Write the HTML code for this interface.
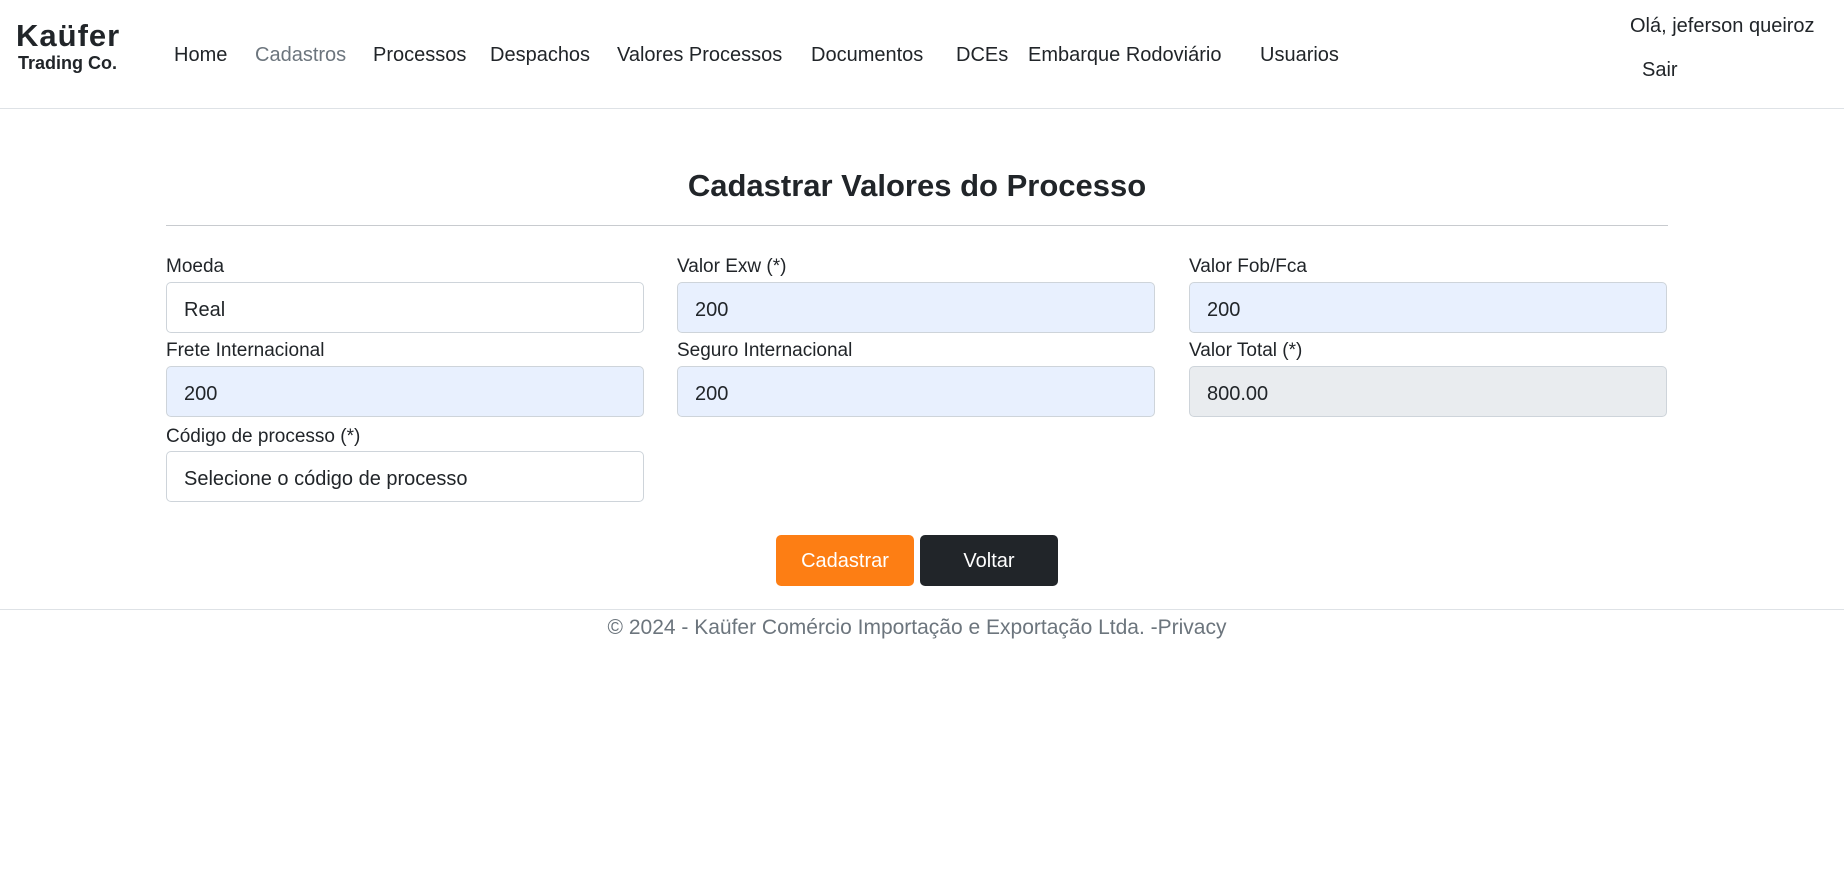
<!DOCTYPE html>
<html><head><meta charset="utf-8"><style>
body{margin:0;width:1844px;height:876px;background:#fff;font-family:"Liberation Sans",sans-serif;color:#212529;position:relative;overflow:hidden}
.a{position:absolute;white-space:nowrap}
.nav{top:44px;font-size:20px;color:#212529}
.hdr{position:absolute;left:0;top:108px;width:1844px;border-top:1px solid #dee2e6}
.lbl{font-size:19px;color:#212529}
.inp{position:absolute;box-sizing:border-box;border:1px solid #ced4da;border-radius:5px;font-size:20px;padding-left:17px;padding-top:3px;line-height:48px;height:51px;width:478px}
.btn{position:absolute;top:535px;height:51px;width:138px;border-radius:5px;color:#fff;font-size:20px;text-align:center;line-height:53px}
</style></head><body>
<div class="a" style="left:16px;top:18px;font-size:31px;font-weight:bold;letter-spacing:1px">Kaüfer</div>
<div class="a" style="left:18px;top:53px;font-size:18px;font-weight:bold">Trading Co.</div>
<div class="a nav" style="left:174px">Home</div>
<div class="a nav" style="left:255px;color:#6c757d">Cadastros</div>
<div class="a nav" style="left:373px">Processos</div>
<div class="a nav" style="left:490px">Despachos</div>
<div class="a nav" style="left:617px">Valores Processos</div>
<div class="a nav" style="left:811px">Documentos</div>
<div class="a nav" style="left:956px">DCEs</div>
<div class="a nav" style="left:1028px">Embarque Rodoviário</div>
<div class="a nav" style="left:1260px">Usuarios</div>
<div class="a" style="left:1630px;top:15px;font-size:20px">Olá, jeferson queiroz</div>
<div class="a" style="left:1642px;top:59px;font-size:20px">Sair</div>
<div class="hdr"></div>
<div class="a" style="left:0;width:1834px;text-align:center;top:168px;font-size:31px;font-weight:bold">Cadastrar Valores do Processo</div>
<div class="a" style="left:166px;top:225px;width:1502px;border-top:1px solid #c8cbcf"></div>

<div class="a lbl" style="left:166px;top:256px">Moeda</div>
<div class="inp" style="left:166px;top:282px;background:#fff">Real</div>
<div class="a lbl" style="left:677px;top:256px">Valor Exw (*)</div>
<div class="inp" style="left:677px;top:282px;background:#e8f0fe">200</div>
<div class="a lbl" style="left:1189px;top:256px">Valor Fob/Fca</div>
<div class="inp" style="left:1189px;top:282px;background:#e8f0fe">200</div>

<div class="a lbl" style="left:166px;top:340px">Frete Internacional</div>
<div class="inp" style="left:166px;top:366px;background:#e8f0fe">200</div>
<div class="a lbl" style="left:677px;top:340px">Seguro Internacional</div>
<div class="inp" style="left:677px;top:366px;background:#e8f0fe">200</div>
<div class="a lbl" style="left:1189px;top:340px">Valor Total (*)</div>
<div class="inp" style="left:1189px;top:366px;background:#e9ecef">800.00</div>

<div class="a lbl" style="left:166px;top:426px">Código de processo (*)</div>
<div class="inp" style="left:166px;top:451px;background:#fff">Selecione o código de processo</div>

<div class="btn" style="left:776px;background:#fd7e14">Cadastrar</div>
<div class="btn" style="left:920px;background:#212529">Voltar</div>
<div class="a" style="left:0;top:609px;width:1844px;border-top:1px solid #dee2e6"></div>
<div class="a" style="left:0;width:1834px;text-align:center;top:616px;font-size:21px;color:#6c757d">© 2024 - Kaüfer Comércio Importação e Exportação Ltda. -Privacy</div>
</body></html>
